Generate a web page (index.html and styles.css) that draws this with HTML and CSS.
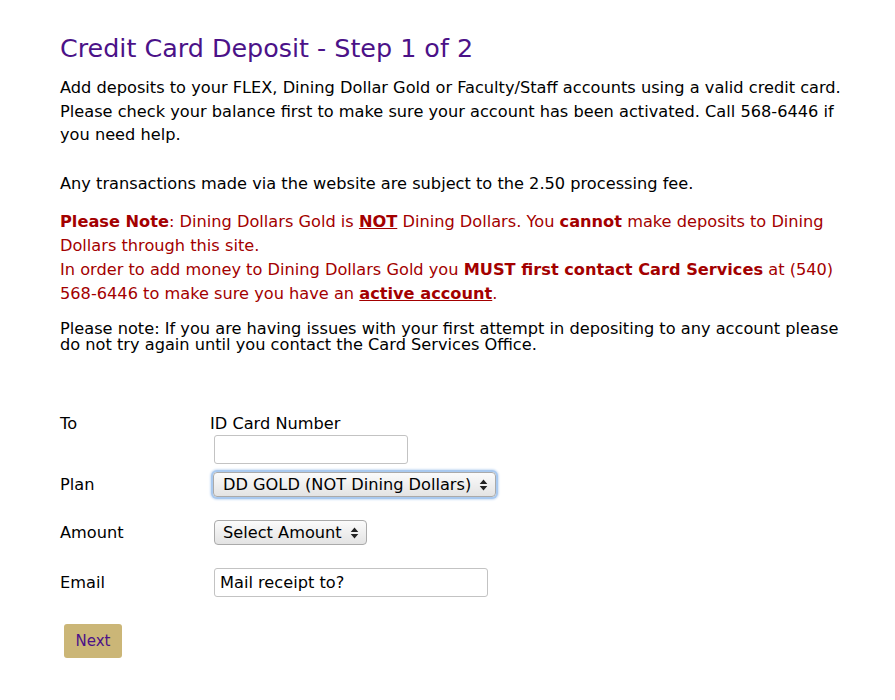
FILE: index.html
```html
<!DOCTYPE html>
<html>
<head>
<meta charset="utf-8">
<link rel="stylesheet" href="styles.css">
</head>
<body>
<div class="page">
  <h1 class="title">Credit Card Deposit - Step 1 of 2</h1>
  <p class="intro">Add deposits to your FLEX, Dining Dollar Gold or Faculty/Staff accounts using a valid credit card. Please check your balance first to make sure your account has been activated. Call 568-6446 if you need help.</p>
  <p class="intro fee">Any transactions made via the website are subject to the 2.50 processing fee.</p>
  <div class="warn">
    <p><b>Please Note</b>: Dining Dollars Gold is <b><u>NOT</u></b> Dining Dollars. You <b>cannot</b> make deposits to Dining Dollars through this site.</p>
    <p>In order to add money to Dining Dollars Gold you <b>MUST first contact Card Services</b> at (540) 568-6446 to make sure you have an <b><u>active account</u></b>.</p>
  </div>
  <p class="note">Please note: If you are having issues with your first attempt in depositing to any account please do not try again until you contact the Card Services Office.</p>

  <div class="form">
    <div class="row row-to">
      <div class="label">To</div>
      <div class="field">
        <div class="sublabel">ID Card Number</div>
        <input class="text id" type="text">
      </div>
    </div>
    <div class="row row-plan">
      <div class="label">Plan</div>
      <div class="field">
        <div class="select focus">DD GOLD (NOT Dining Dollars)<span class="arrows"><svg width="9" height="14" viewBox="0 0 9 14"><path d="M4.5 1.5 L8.3 6 H0.7 Z M4.5 12.5 L8.3 8 H0.7 Z" fill="#222"/></svg></span></div>
      </div>
    </div>
    <div class="row row-amount">
      <div class="label">Amount</div>
      <div class="field">
        <div class="select">Select Amount<span class="arrows"><svg width="9" height="14" viewBox="0 0 9 14"><path d="M4.5 1.5 L8.3 6 H0.7 Z M4.5 12.5 L8.3 8 H0.7 Z" fill="#222"/></svg></span></div>
      </div>
    </div>
    <div class="row row-email">
      <div class="label">Email</div>
      <div class="field">
        <div class="text email">Mail receipt to?</div>
      </div>
    </div>
    <button class="next">Next</button>
  </div>
</div>
</body>
</html>
```
FILE: styles.css
```css
html, body { margin: 0; padding: 0; background: #fff; }
body { font-family: Verdana, "DejaVu Sans", sans-serif; color: #000; }
.page { padding: 30px 0 0 60px; width: 796px; }
.title { font-weight: normal; font-size: 25.4px; color: #4b1288; margin: 0 0 10px 0; line-height: 36px; }
.intro { font-size: 16.2px; line-height: 23.5px; margin: 0; }
.fee { margin-top: 25px; }
.warn { color: #a30000; font-size: 16.2px; line-height: 24px; margin-top: 15px; }
.warn p { margin: 0; }
.note { font-size: 16.2px; line-height: 16px; margin: 15px 0 0 0; }
.form { margin-top: 61px; }
.row { display: flex; font-size: 16.2px; }
.label { width: 150px; }
.sublabel { margin-bottom: 1px; line-height: 20px; }
.text { box-sizing: border-box; border: 1px solid #c3c3c3; border-radius: 3px; background: #fff; font: inherit; }
.id { width: 194px; height: 29px; margin-left: 4px; display: block; }
.row-plan { margin-top: 8px; align-items: center; }
.select { box-sizing: border-box; display: inline-flex; align-items: center; height: 25px; padding: 0 7px 0 8px; border: 1px solid #aaa; border-radius: 4px; background: linear-gradient(#fbfbfb, #e3e3e3); font-size: 16.2px; margin-left: 4px; }
.select .arrows { display: inline-block; margin-left: 8px; line-height: 0; }
.select.focus { box-shadow: 0 0 0 2px #a9c9ef, 0 0 2px 3px #cfe0f5; margin-left: 3px; height: 25px; padding-left: 9px; }
.row-amount { margin-top: 23px; align-items: center; }
.row-email { margin-top: 23px; align-items: center; }
.email { width: 274px; height: 29px; margin-left: 4px; padding: 4px 5px; line-height: 20px; }
.next { margin: 27px 0 0 4px; width: 58px; height: 34px; background: #cbb677; border: none; border-radius: 3px; color: #4b1288; font-family: Verdana, "DejaVu Sans", sans-serif; font-size: 15px; padding: 0; }
```
